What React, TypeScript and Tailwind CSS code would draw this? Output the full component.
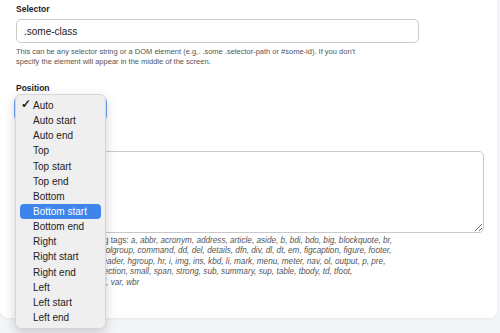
const positions = [
  "Auto",
  "Auto start",
  "Auto end",
  "Top",
  "Top start",
  "Top end",
  "Bottom",
  "Bottom start",
  "Bottom end",
  "Right",
  "Right start",
  "Right end",
  "Left",
  "Left start",
  "Left end",
];

const tagLines = [
  "a, abbr, acronym, address, article, aside, b, bdi, bdo, big, blockquote, br,",
  "caption, cite, code, col, colgroup, command, dd, del, details, dfn, div, dl, dt, em, figcaption, figure, footer,",
  "h1, h2, h3, h4, h5, h6, header, hgroup, hr, i, img, ins, kbd, li, mark, menu, meter, nav, ol, output, p, pre,",
  "q, rp, rt, ruby, s, samp, section, small, span, strong, sub, summary, sup, table, tbody, td, tfoot,",
  "th, thead, time, tr, tt, u, ul, var, wbr",
];

export default function App() {
  return (
    <div
      className="relative h-[333px] w-[500px] overflow-hidden bg-[#f4f5f8]"
      style={{ fontFamily: '"Liberation Sans", Arial, sans-serif' }}
    >
      <div className="mr-[3px] rounded-b-lg bg-white px-4 pb-[30px] pt-[4px] shadow-[0_1px_3px_rgba(0,0,0,0.06)]">
        {/* Selector */}
        <label className="block h-[11px] text-[8.5px] font-semibold leading-[11px] text-[#222]">
          Selector
        </label>
        <input
          readOnly
          defaultValue=".some-class"
          className="mt-[4px] block h-[24px] w-[403px] rounded-[5px] border border-[#c9c9c9] bg-white px-[7px] text-[10px] text-[#222] outline-none"
        />
        <p className="mt-[4px] whitespace-nowrap text-[7.5px] leading-[10px] text-[#555]">
          This can be any selector string or a DOM element (e.g,. .some .selector-path or #some-id). If you don't
          <br />
          specify the element will appear in the middle of the screen.
        </p>

        {/* Position */}
        <label className="mt-[15.5px] block h-[11px] text-[8.5px] font-semibold leading-[11px] text-[#222]">
          Position
        </label>
        <div className="ml-[-2px] mt-[2.5px] flex h-[26px] w-[93px] items-center rounded-[6px] border-2 border-[#6ea2ee] px-2 text-[10px] text-[#222]">
          Auto
        </div>

        {/* Content */}
        <label className="mt-[16px] block h-[11px] text-[8.5px] font-semibold leading-[11px] text-[#222]">
          Content
        </label>
        <textarea
          readOnly
          className="mt-[2px] block h-[82px] w-[468px] rounded-[5px] border border-[#c9c9c9] bg-white text-[10px] outline-none"
        />
        <div className="mt-[2.75px] whitespace-nowrap text-[8.2px] leading-[10.5px] text-[#555]">
          {tagLines.map((line, i) => (
            <div key={i}>
              {i === 0 && <span>You can use the following tags: </span>}
              <span className="italic">{line}</span>
            </div>
          ))}
        </div>
      </div>

      {/* Open select menu */}
      <div className="absolute left-[15px] top-[94px] w-[91px] rounded-[6px] border border-[#d6d6d6] bg-[#efefef] py-[3px] shadow-[0_4px_12px_rgba(0,0,0,0.18)]">
        {positions.map((p, i) => (
          <div
            key={p}
            className={
              i === 7
                ? "mx-[4px] flex h-[15.15px] items-center rounded-[4px] bg-[#3d85eb] pl-[13px] text-[10px] text-white"
                : "mx-[4px] flex h-[15.15px] items-center pl-[13px] text-[10px] text-[#222]"
            }
          >
            {i === 0 ? (
              <span className="relative">
                <span className="absolute left-[-12px] top-[-2px] text-[11.5px] font-bold">✓</span>
                {p}
              </span>
            ) : (
              p
            )}
          </div>
        ))}
      </div>
    </div>
  );
}
